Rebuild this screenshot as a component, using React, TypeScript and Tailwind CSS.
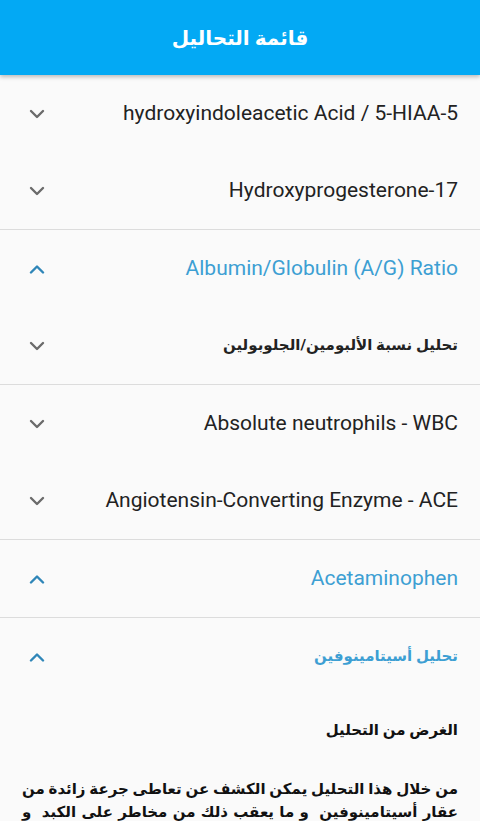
import React from 'react';

type Row = { title: string; open?: boolean; arabic?: boolean };

const groups: Row[][] = [
  [
    { title: 'hydroxyindoleacetic Acid / 5-HIAA-5' },
    { title: 'Hydroxyprogesterone-17' },
  ],
  [
    { title: 'Albumin/Globulin (A/G) Ratio', open: true },
    { title: 'تحليل نسبة الألبومين/الجلوبولين', arabic: true },
  ],
  [
    { title: 'Absolute neutrophils - WBC' },
    { title: 'Angiotensin-Converting Enzyme - ACE' },
  ],
  [{ title: 'Acetaminophen', open: true }],
];

const Chevron = ({ up }: { up?: boolean }) => (
  <svg width="16" height="10" viewBox="0 0 16 10" className="shrink-0">
    <path
      d={up ? 'M2 8.5 L8 2.5 L14 8.5' : 'M2 2 L8 8 L14 2'}
      fill="none"
      stroke={up ? '#2f86b8' : '#6b6b6b'}
      strokeWidth="2.4"
      strokeLinecap="round"
      strokeLinejoin="round"
    />
  </svg>
);

const ItemRow = ({ title, open, arabic }: Row) => (
  <div className="h-[77px] flex items-center justify-between pl-[29px] pr-[22px]">
    <Chevron up={open} />
    <span
      dir={arabic ? 'rtl' : 'ltr'}
      className={`${arabic ? 'text-[15px] font-bold' : 'text-[21px]'} ${open ? 'text-[#3d9fd3]' : 'text-[#222]'} whitespace-nowrap`}
    >
      {title}
    </span>
  </div>
);

export default function App() {
  return (
    <div className="w-[480px] h-[821px] overflow-hidden bg-[#fafafa] font-['Roboto','DejaVu_Sans',sans-serif]">
      <header className="relative z-10 h-[75px] bg-[#03a9f4] flex items-center justify-center shadow-[0_2px_4px_rgba(0,0,0,0.25)]">
        <h1 dir="rtl" className="text-white text-[20px] font-bold">
          قائمة التحاليل
        </h1>
      </header>

      {groups.map((g, i) => (
        <div key={i} className="border-b border-[#dcdcdc]">
          {g.map((r) => (
            <ItemRow key={r.title} {...r} />
          ))}
        </div>
      ))}

      <ItemRow title="تحليل أسيتامينوفين" open arabic />

      <div dir="rtl" className="pl-[22px] pr-[22px] pt-[24px] text-[#111] font-bold text-[15px]">
        <p className="leading-[23px]">الغرض من التحليل</p>
        <div className="mt-[36px] leading-[23px]">
          <p className="text-justify [text-align-last:justify]">
            من خلال هذا التحليل يمكن الكشف عن تعاطى جرعة زائدة من
          </p>
          <p className="text-justify [text-align-last:justify]">
            عقار أسيتامينوفين &nbsp;و ما يعقب ذلك من مخاطر على الكبد &nbsp;و
          </p>
          <p>الكلى</p>
        </div>
      </div>
    </div>
  );
}
